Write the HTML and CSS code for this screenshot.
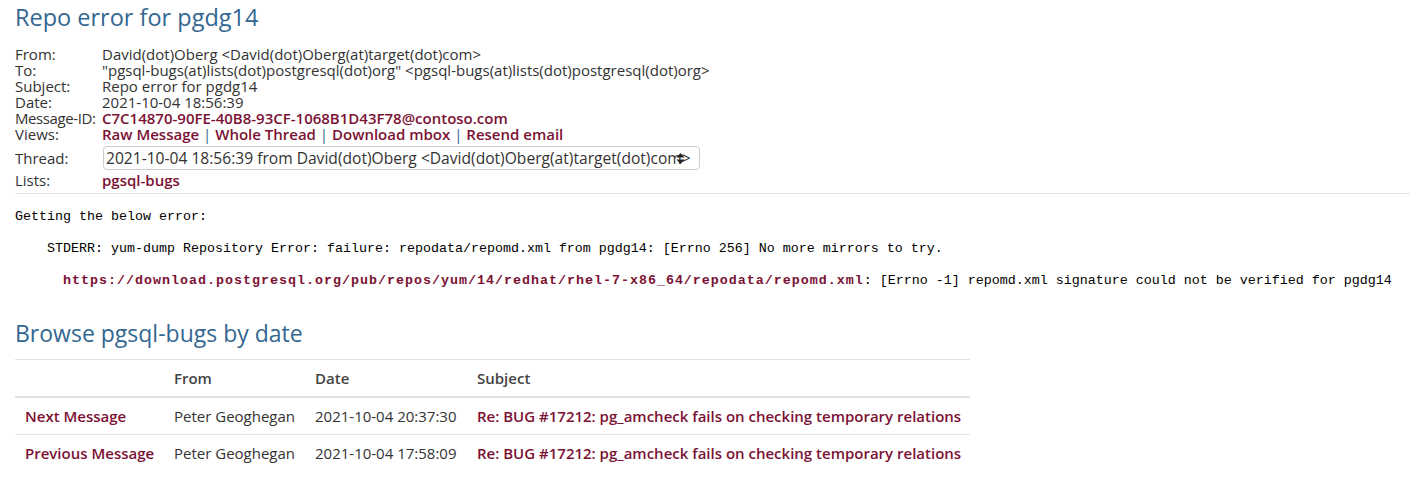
FILE: index.html
```html
<!DOCTYPE html>
<html>
<head>
<meta charset="utf-8">
<link rel="stylesheet" href="styles.css">
</head>
<body>
<div class="page">
  <h1 class="title">Repo error for pgdg14</h1>
  <div class="headers">
    <div class="label">From:</div><div class="value">David(dot)Oberg &lt;David(dot)Oberg(at)target(dot)com&gt;</div>
    <div class="label">To:</div><div class="value">"pgsql-bugs(at)lists(dot)postgresql(dot)org" &lt;pgsql-bugs(at)lists(dot)postgresql(dot)org&gt;</div>
    <div class="label">Subject:</div><div class="value">Repo error for pgdg14</div>
    <div class="label">Date:</div><div class="value">2021-10-04 18:56:39</div>
    <div class="label label-tight">Message-ID:</div><div class="value"><a href="#">C7C14870-90FE-40B8-93CF-1068B1D43F78@contoso.com</a></div>
    <div class="label">Views:</div><div class="value"><a href="#">Raw Message</a> <span class="sep">|</span> <a href="#">Whole Thread</a> <span class="sep">|</span> <a href="#">Download mbox</a> <span class="sep">|</span> <a href="#">Resend email</a></div>
    <div class="label thread-label">Thread:</div>
    <div class="value thread-value">
      <div class="select">
        <span class="select-text">2021-10-04 18:56:39 from David(dot)Oberg &lt;David(dot)Oberg(at)target(dot)com&gt;</span>
        <svg class="select-arrows" width="9" height="13" viewBox="0 0 9 13"><path d="M4.5 1 L8.5 5.5 L0.5 5.5 Z M4.5 12 L8.5 7.5 L0.5 7.5 Z" fill="#222"/></svg>
      </div>
    </div>
    <div class="label lists-label">Lists:</div><div class="value lists-value"><a href="#">pgsql-bugs</a></div>
  </div>
  <hr class="rule">
<pre class="body">Getting the below error:

    STDERR: yum-dump Repository Error: failure: repodata/repomd.xml from pgdg14: [Errno 256] No more mirrors to try.

      <a class="url" href="#">https://download.postgresql.org/pub/repos/yum/14/redhat/rhel-7-x86_64/repodata/repomd.xml</a>: [Errno -1] repomd.xml signature could not be verified for pgdg14</pre>
  <h2 class="browse">Browse pgsql-bugs by date</h2>
  <table class="nav">
    <colgroup><col class="c1"><col class="c2"><col class="c3"><col class="c4"></colgroup>
    <thead>
      <tr><th></th><th>From</th><th>Date</th><th>Subject</th></tr>
    </thead>
    <tbody>
      <tr><td><a href="#">Next Message</a></td><td>Peter Geoghegan</td><td>2021-10-04 20:37:30</td><td><a href="#">Re: BUG #17212: pg_amcheck fails on checking temporary relations</a></td></tr>
      <tr><td><a href="#">Previous Message</a></td><td>Peter Geoghegan</td><td>2021-10-04 17:58:09</td><td><a href="#">Re: BUG #17212: pg_amcheck fails on checking temporary relations</a></td></tr>
    </tbody>
  </table>
</div>
</body>
</html>
```

FILE: styles.css
```css
html, body {
  margin: 0;
  padding: 0;
  background: #fff;
}
body {
  font-family: "Open Sans", "Noto Sans", sans-serif;
  font-size: 15px;
  color: #333;
}
a {
  color: #7b1234;
  text-decoration: none;
}
.headers a, .nav a {
  font-weight: 600;
}
.page {
  padding: 0 0 0 15px;
}
.title {
  margin: 0;
  padding-top: 2px;
  font-size: 23.5px;
  line-height: 30px;
  font-weight: 400;
  color: #336791;
}
.headers {
  display: grid;
  grid-template-columns: 87px auto;
  margin-top: 14px;
  line-height: 16px;
}
.label, .value {
  height: 16px;
  white-space: nowrap;
}
.label-tight {
  letter-spacing: -0.4px;
}
.thread-label, .thread-value {
  height: 24px;
  margin-top: 4px;
}
.thread-label {
  line-height: 24px;
}
.lists-label, .lists-value {
  margin-top: 2px;
  height: 17px;
  line-height: 17px;
}
.sep {
  color: #336791;
}
.select {
  position: relative;
  box-sizing: border-box;
  width: 597px;
  height: 24px;
  margin-left: 1px;
  border: 1px solid #ccc;
  border-radius: 4px;
  padding: 0 2px;
  font-size: 15.6px;
  line-height: 22px;
  white-space: nowrap;
  overflow: hidden;
  color: #333;
}
.select-arrows {
  position: absolute;
  right: 14px;
  top: 5px;
}
.rule {
  margin: 4px 0 0 0;
  border: 0;
  border-top: 1px solid #e5e5e5;
}
.body {
  margin: 15px 0 0 0;
  font-family: "Liberation Mono", "DejaVu Sans Mono", monospace;
  font-size: 13.333px;
  line-height: 16px;
  color: #000;
}
.url {
  font-weight: bold;
  letter-spacing: 1px;
}
.browse {
  margin: 28px 0 0 0;
  font-size: 23px;
  line-height: 32px;
  font-weight: 400;
  color: #336791;
}
.nav {
  margin-top: 10px;
  border-collapse: collapse;
  width: 955px;
  table-layout: fixed;
}
.c1 { width: 149px; }
.c2 { width: 141px; }
.c3 { width: 162px; }
.c4 { width: 503px; }
.nav th, .nav td {
  text-align: left;
  padding: 8px 10px;
  line-height: 20px;
  border-top: 1px solid #dee2e6;
  white-space: nowrap;
}
.nav th {
  font-weight: 600;
  color: #444;
  border-bottom: 2px solid #dee2e6;
}
```
